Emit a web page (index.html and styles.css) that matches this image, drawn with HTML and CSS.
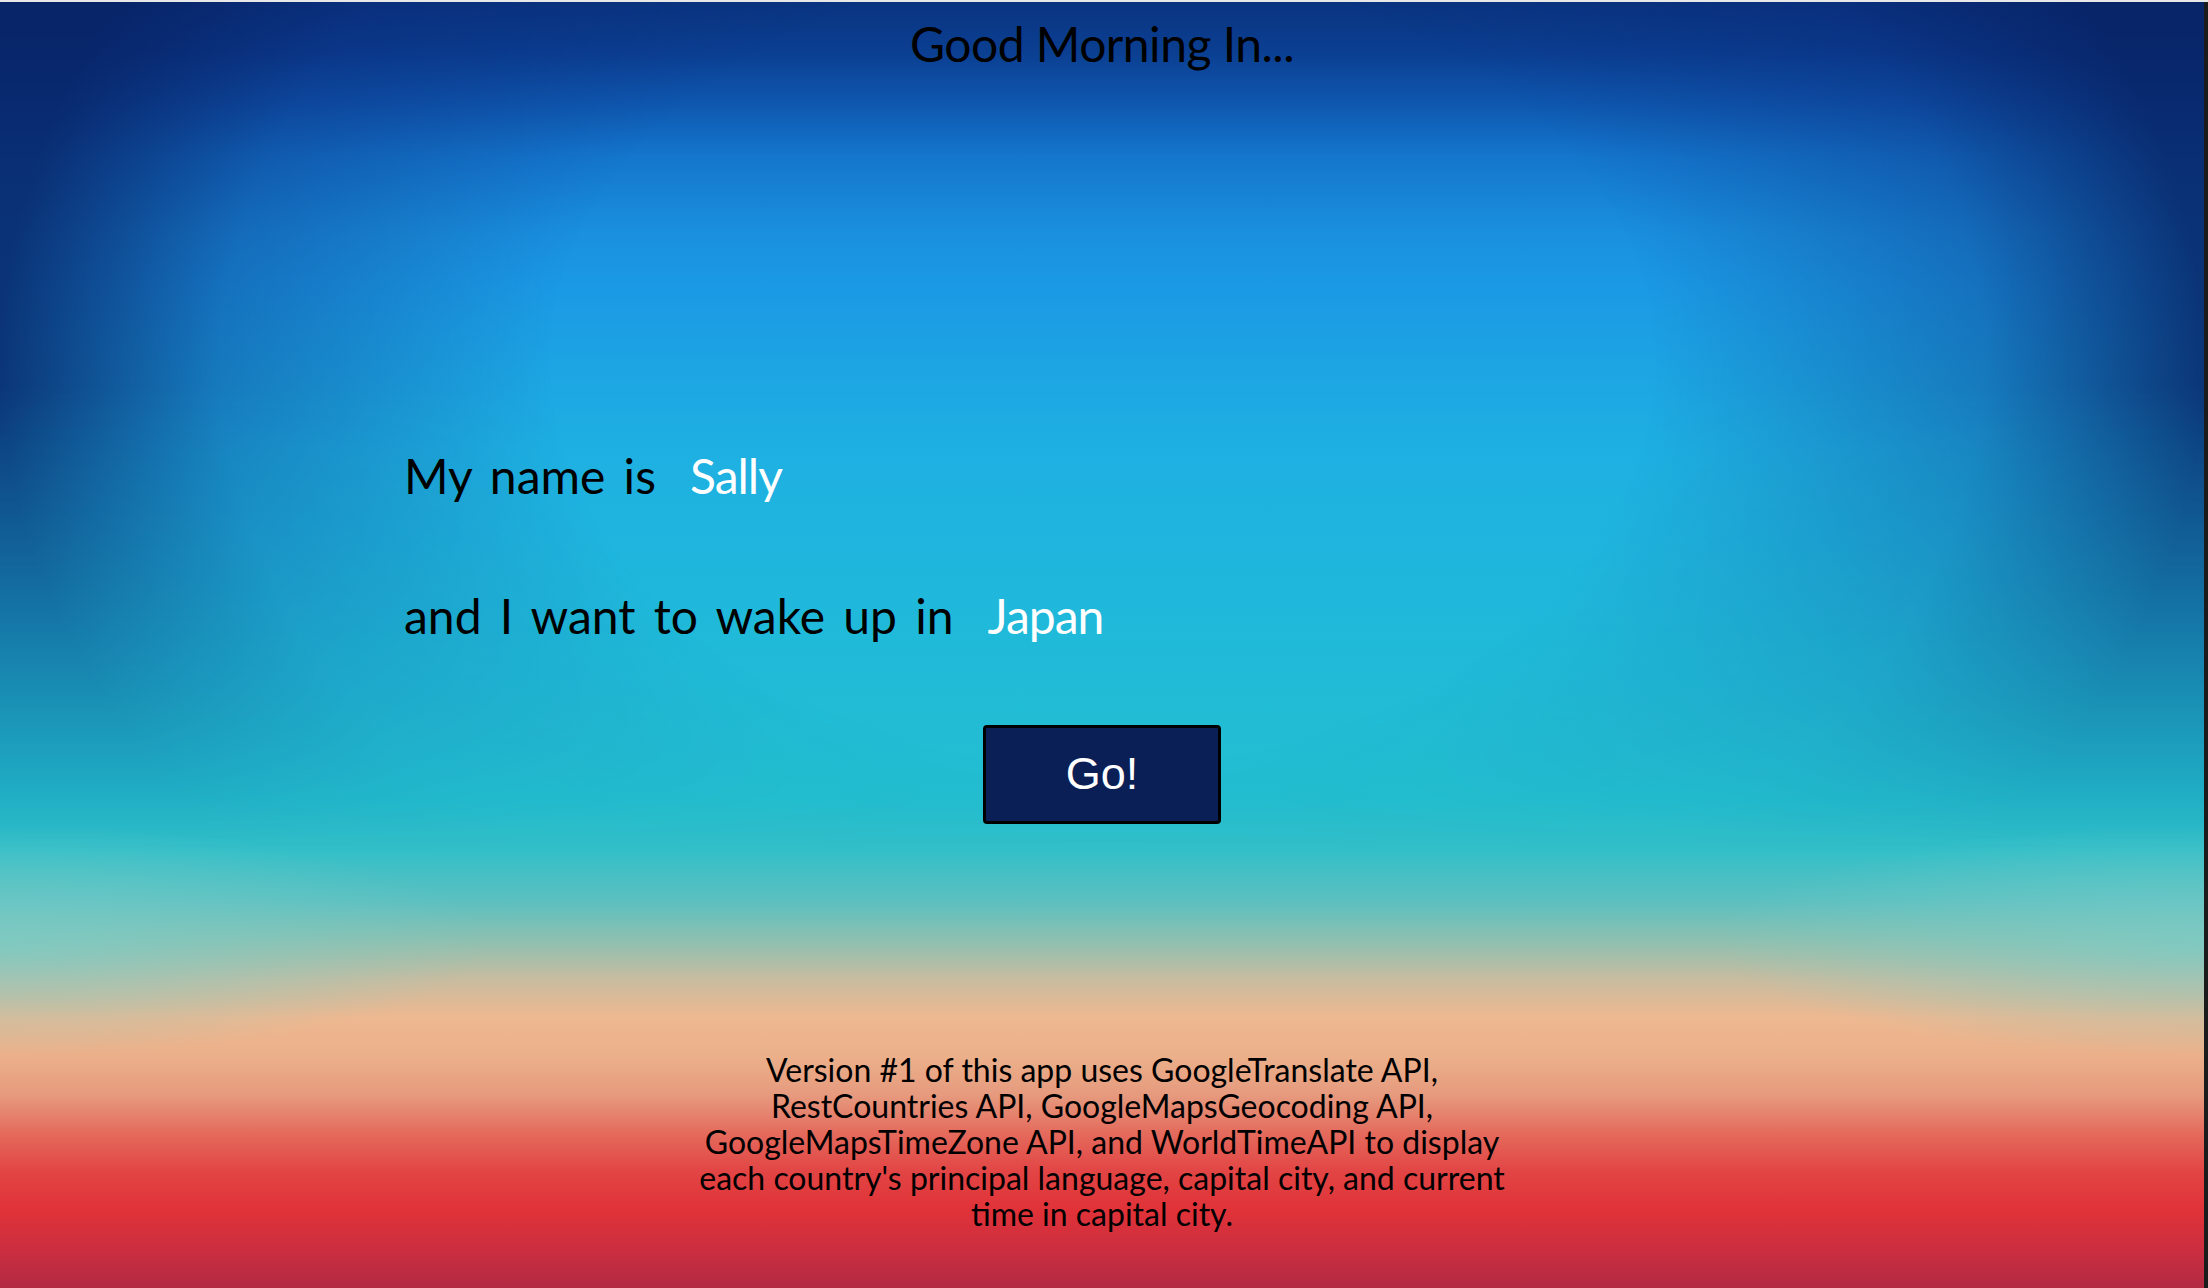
FILE: index.html
```html
<!DOCTYPE html>
<html lang="en">
<head>
<meta charset="utf-8">
<title>Good Morning In...</title>
<link rel="stylesheet" href="styles.css">
</head>
<body>
<div class="page">
  <h1 class="title">Good Morning In...</h1>
  <main class="form">
    <div class="row">
      <label class="label" for="name">My name is</label>
      <input class="field" id="name" type="text" value="Sally">
    </div>
    <div class="row">
      <label class="label" for="country">and I want to wake up in</label>
      <input class="field" id="country" type="text" value="Japan">
    </div>
    <div class="actions">
      <button class="go" type="button">Go!</button>
    </div>
  </main>
  <footer class="footer">
    <p class="about">Version #1 of this app uses GoogleTranslate API, RestCountries API, GoogleMapsGeocoding API, GoogleMapsTimeZone API, and WorldTimeAPI to display each country's principal language, capital city, and current time in capital city.</p>
  </footer>
</div>
</body>
</html>
```

FILE: styles.css
```css
html, body {
  margin: 0;
  padding: 0;
  height: 100%;
}

body {
  background: #1b1b1b;
  border-top: 2px solid #e8e8e8;
  box-sizing: border-box;
  padding-right: 4px;
  font-family: Lato, "Open Sans", sans-serif;
  overflow: hidden;
}

.page {
  position: relative;
  height: 1286px;
  display: flex;
  flex-direction: column;
  align-items: center;
  background: linear-gradient(to bottom,
    #0a3480 0%,
    #0b3f92 4%,
    #0f58b0 8%,
    #1476cc 12%,
    #1a90de 18%,
    #1b99e4 22%,
    #1eb0e2 35%,
    #20bad9 50%,
    #23bfd0 62%,
    #33bfc8 66%,
    #5dc0c0 70%,
    #8ec0b0 73%,
    #c8bca0 76%,
    #eeb890 79%,
    #ebb08a 82%,
    #e69a7e 85%,
    #e46a5c 88%,
    #e24444 91%,
    #e03238 94%,
    #cc2e40 97%,
    #b22a42 100%);
  overflow: hidden;
}

.page::before {
  content: "";
  position: absolute;
  inset: 0;
  background: radial-gradient(ellipse 50% 62% at 50% 28%,
    rgba(10, 40, 120, 0) 50%,
    rgba(10, 40, 120, 0.35) 80%,
    rgba(8, 34, 100, 0.85) 100%);
  -webkit-mask-image: linear-gradient(to bottom, #000 0%, #000 30%, rgba(0,0,0,0.6) 45%, transparent 66%);
  mask-image: linear-gradient(to bottom, #000 0%, #000 30%, rgba(0,0,0,0.6) 45%, transparent 66%);
  pointer-events: none;
}

.page::after {
  content: "";
  position: absolute;
  inset: 0;
  background:
    radial-gradient(ellipse 22% 9% at 0% 73%, rgba(120, 205, 200, 0.7), rgba(120, 205, 200, 0) 100%),
    radial-gradient(ellipse 22% 9% at 100% 73%, rgba(120, 205, 200, 0.7), rgba(120, 205, 200, 0) 100%);
  pointer-events: none;
}

.title, .form, .footer {
  position: relative;
  z-index: 1;
}

.title {
  margin: 13px 0 0;
  font-size: 48px;
  line-height: 1.2;
  font-weight: 400;
  color: #000;
  letter-spacing: -0.5px;
}

.form {
  width: 1396px;
  margin-top: 374px;
  display: flex;
  flex-direction: column;
  gap: 83px;
}

.row {
  display: flex;
  align-items: baseline;
  gap: 34px;
  font-size: 48px;
  line-height: 1.2;
}

.label {
  color: #000;
  word-spacing: 6px;
}

.field {
  font: inherit;
  color: #fff;
  background: transparent;
  border: none;
  outline: none;
  padding: 0;
  width: 400px;
  letter-spacing: -1px;
}

.actions {
  display: flex;
  justify-content: center;
  margin-top: -3px;
}

.go {
  width: 238px;
  height: 99px;
  background: #0a1f56;
  border: 3px solid #000;
  border-radius: 4px;
  color: #fff;
  font-family: "Liberation Sans", Arial, sans-serif;
  font-size: 45px;
  padding: 0;
}

.footer {
  margin-top: auto;
  margin-bottom: 56px;
  width: 816px;
}

.about {
  margin: 0;
  text-align: center;
  font-size: 32px;
  line-height: 36px;
  color: #000;
}
```
